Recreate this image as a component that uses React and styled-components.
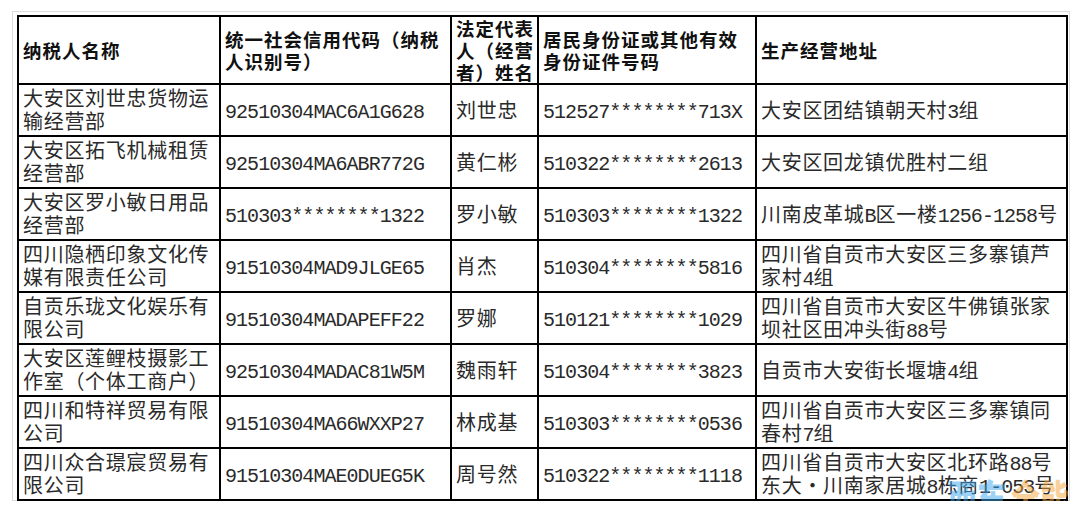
import React from 'react';
import styled, { createGlobalStyle } from 'styled-components';

const rows = [
    ['大安区刘世忠货物运输经营部', '92510304MAC6A1G628', '刘世忠', '512527********713X', '大安区团结镇朝天村3组'],
    ['大安区拓飞机械租赁经营部', '92510304MA6ABR772G', '黄仁彬', '510322********2613', '大安区回龙镇优胜村二组'],
    ['大安区罗小敏日用品经营部', '510303********1322', '罗小敏', '510303********1322', '川南皮革城B区一楼1256-1258号'],
    ['四川隐栖印象文化传媒有限责任公司', '91510304MAD9JLGE65', '肖杰', '510304********5816', '四川省自贡市大安区三多寨镇芦家村4组'],
    ['自贡乐珑文化娱乐有限公司', '91510304MADAPEFF22', '罗娜', '510121********1029', '四川省自贡市大安区牛佛镇张家坝社区田冲头街88号'],
    ['大安区莲鲤枝摄影工作室（个体工商户）', '92510304MADAC81W5M', '魏雨轩', '510304********3823', '自贡市大安街长堰塘4组'],
    ['四川和特祥贸易有限公司', '91510304MA66WXXP27', '林成基', '510303********0536', '四川省自贡市大安区三多寨镇同春村7组'],
    ['四川众合璟宸贸易有限公司', '91510304MAE0DUEG5K', '周号然', '510322********1118', '四川省自贡市大安区北环路88号东大・川南家居城8栋商1-053号'],
];

const widths = [202, 231, 87, 218, 311];

// wrap runs of half-width characters so they keep the narrow pitch
const Mixed = ({ text }) =>
    text.split(/([\x21-\x7E]+)/).map((part, i) =>
        /^[\x21-\x7E]+$/.test(part) ? <S.Latin key={i}>{part}</S.Latin> : part
    );

const App = () => {
    return (
        <>
            <GlobalStyle />
            <S.Frame>
                <S.Table>
                    <colgroup>
                        {widths.map((w, i) => (
                            <S.Col key={i} $w={w} />
                        ))}
                    </colgroup>
                    <thead>
                        <S.HeadRow>
                            <S.Th>纳税人名称</S.Th>
                            <S.Th>统一社会信用代码（纳税人识别号）</S.Th>
                            <S.Th>法定代表人（经营者）姓名</S.Th>
                            <S.Th>居民身份证或其他有效<br />身份证件号码</S.Th>
                            <S.Th>生产经营地址</S.Th>
                        </S.HeadRow>
                    </thead>
                    <tbody>
                        {rows.map((row, r) => (
                            <S.Row key={r} $last={r === rows.length - 1}>
                                {row.map((cell, c) => (
                                    <S.Td key={c}>
                                        <Mixed text={cell} />
                                    </S.Td>
                                ))}
                            </S.Row>
                        ))}
                    </tbody>
                </S.Table>
                <S.Watermark>
                    <span className='blue'>西东</span>
                    <span className='orange'>全能</span>
                </S.Watermark>
            </S.Frame>
        </>
    );
};

export default App;

const GlobalStyle = createGlobalStyle`
    html, body {
        margin: 0;
        padding: 0;
        background: #ffffff;
        overflow: hidden;
    }
    body {
        font-family: "Noto Sans CJK SC", "Liberation Sans", sans-serif;
    }
`;

const S = {};
S.Frame = styled.div`
    position: relative;
    box-sizing: border-box;
    margin: 11px 0 0 12px;
    width: 1058px;
    height: 490px;
    border: 1px solid #dcdcdc;
    padding: 3px 0 0 4px;
`;

S.Table = styled.table`
    border-collapse: collapse;
    table-layout: fixed;
    width: 1051px;
    color: #222;
`;

S.Col = styled.col`
    width: ${({ $w }) => $w}px;
`;

S.HeadRow = styled.tr`
    height: 68px;
`;

S.Row = styled.tr`
    height: ${({ $last }) => ($last ? '50px' : '52px')};
`;

S.Th = styled.th`
    border: 2px solid #000;
    padding: 0 3px 0 4px;
    text-align: left;
    vertical-align: middle;
    font-family: "Noto Sans CJK SC", sans-serif;
    font-weight: 700;
    font-size: 18.5px;
    letter-spacing: 1px;
    line-height: 22px;
    color: #111;
    word-break: break-all;
`;

S.Td = styled.td`
    border: 2px solid #000;
    padding: 4px 2px 0 4px;
    text-align: left;
    vertical-align: middle;
    font-family: "Liberation Mono", "Noto Sans CJK SC", monospace;
    font-weight: 400;
    font-size: 20px;
    letter-spacing: 0.7px;
    line-height: 23px;
    color: #2a2a2a;
    word-break: break-all;
    overflow: hidden;
`;

S.Latin = styled.span`
    font-family: "Liberation Mono", monospace;
    letter-spacing: -0.95px;
`;

S.Watermark = styled.div`
    position: absolute;
    right: 0;
    top: 456px;
    display: flex;
    gap: 5px;
    font-family: "Noto Sans CJK SC", sans-serif;
    font-weight: 900;
    font-size: 29px;
    line-height: 40px;
    opacity: 0.5;
    transform: scaleY(1.35);
    transform-origin: top;
    pointer-events: none;

    & .blue {
        color: #3ea6ee;
    }
    & .orange {
        color: #f5a53c;
    }
`;
